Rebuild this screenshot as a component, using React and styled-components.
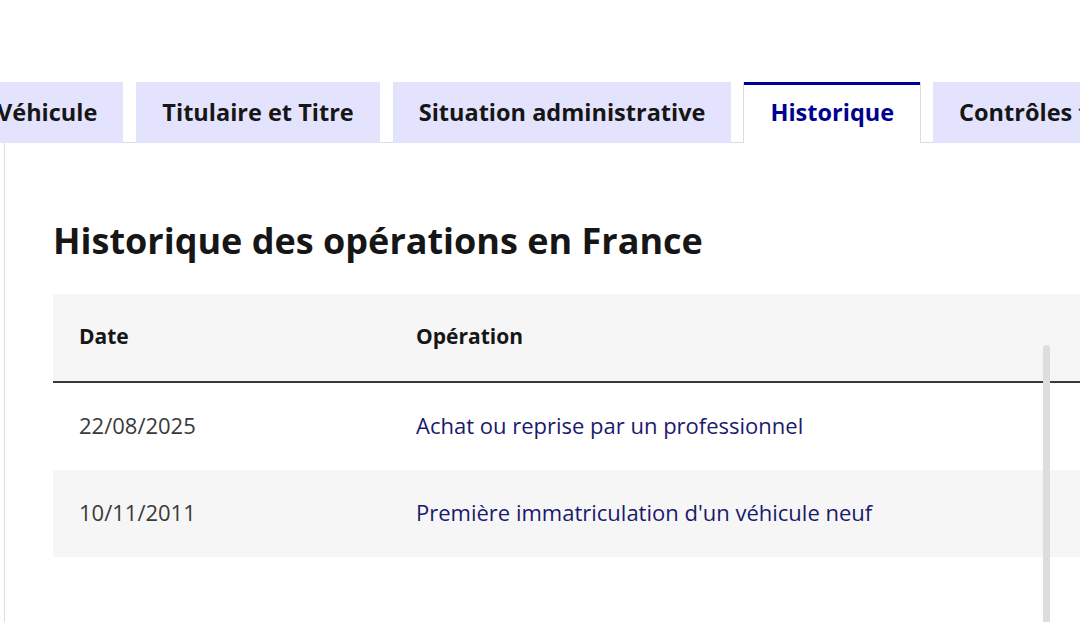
import React from 'react'
import styled, { createGlobalStyle } from 'styled-components'

const Global = createGlobalStyle`
  html, body {
    margin: 0;
    padding: 0;
    background: #fff;
    overflow: hidden;
  }
  body {
    font-family: "Open Sans", Lato, sans-serif;
    color: #161616;
  }
`

const Page = styled.div`
  position: relative;
  width: 1080px;
  height: 622px;
  overflow: hidden;
  padding-top: 82px;
  box-sizing: border-box;
`

const TabList = styled.div`
  display: flex;
  gap: 13px;
  margin-left: -29px;
  height: 61px;
  box-shadow: inset 0 -1px 0 #ddd;
`

const Tab = styled.div`
  flex: none;
  display: flex;
  align-items: center;
  padding: 0 26px 1px;
  font-size: 23.5px;
  font-weight: 700;
  white-space: nowrap;
  box-sizing: border-box;
  background: ${p => (p.$active ? '#fff' : '#e3e3fd')};
  color: ${p => (p.$active ? '#000091' : '#161616')};
  box-shadow: ${p =>
    p.$active ? 'inset 0 3px 0 #000091, -1px 0 0 #ddd, 1px 0 0 #ddd' : 'none'};
`

const Panel = styled.div`
  margin-left: 4px;
  border-left: 1px solid #ddd;
  padding: 75px 0 0 48px;
  height: 480px;
`

const Title = styled.h2`
  margin: 0 0 30px;
  font-size: 36px;
  line-height: 46px;
  font-weight: 700;
  color: #161616;
`

const Table = styled.div`
  width: 1200px;
`

const Row = styled.div`
  display: grid;
  grid-template-columns: 337px 1fr;
  height: 87px;
  background: ${p => (p.$shade ? '#f6f6f6' : '#fff')};
  border-bottom: ${p => (p.$head ? '2px solid #3a3a3a' : '0')};
`

const Cell = styled.div`
  display: flex;
  align-items: center;
  padding: 0 26px 3px;
  font-size: ${p => (p.$head ? '21px' : '22px')};
  font-weight: ${p => (p.$head ? 700 : 400)};
  color: ${p => (p.$head ? '#161616' : p.$link ? '#1a1a6c' : '#3a3a3a')};
`

const Scrollbar = styled.div`
  position: absolute;
  left: 1043px;
  top: 345px;
  width: 7px;
  bottom: 0;
  background: #ddd;
  border-radius: 4px 4px 0 0;
`

const tabs = ['Véhicule', 'Titulaire et Titre', 'Situation administrative', 'Historique', 'Contrôles techniques']

const rows = [
  ['22/08/2025', 'Achat ou reprise par un professionnel'],
  ['10/11/2011', "Première immatriculation d'un véhicule neuf"],
]

export default function App() {
  return (
    <Page>
      <Global />
      <TabList>
        {tabs.map(t => (
          <Tab key={t} $active={t === 'Historique'}>{t}</Tab>
        ))}
      </TabList>
      <Panel>
        <Title>Historique des opérations en France</Title>
        <Table>
          <Row $head $shade>
            <Cell $head>Date</Cell>
            <Cell $head>Opération</Cell>
          </Row>
          {rows.map((r, i) => (
            <Row key={r[0]} $shade={i % 2 === 1}>
              <Cell>{r[0]}</Cell>
              <Cell $link>{r[1]}</Cell>
            </Row>
          ))}
        </Table>
      </Panel>
      <Scrollbar />
    </Page>
  )
}
